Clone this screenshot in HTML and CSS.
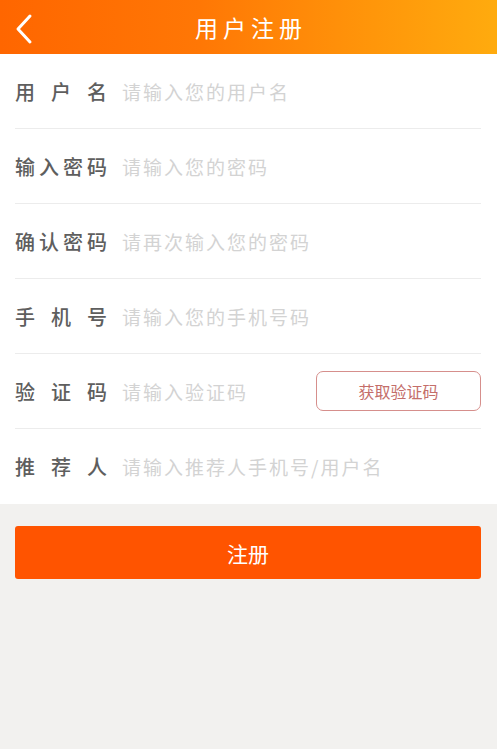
FILE: index.html
```html
<!DOCTYPE html>
<html lang="zh-CN">
<head>
    <meta charset="UTF-8">
    <meta name="viewport" content="width=device-width, initial-scale=1.0">
    <title>用户注册</title>
    <link rel="stylesheet" href="styles.css">
</head>
<body>
    <header class="top-bar">
        <a class="back-btn" href="#">
            <svg width="20" height="32" viewBox="0 0 20 32">
                <polyline points="16,3 4,16 16,29" fill="none" stroke="#fff" stroke-width="3" stroke-linecap="round" stroke-linejoin="round"/>
            </svg>
        </a>
        <h1 class="page-title">用户注册</h1>
    </header>

    <form class="reg-form">
        <div class="form-list">
            <div class="form-row">
                <label class="row-label" for="username">用户名</label>
                <input type="text" id="username" placeholder="请输入您的用户名">
            </div>
            <div class="form-row">
                <label class="row-label" for="pwd">输入密码</label>
                <input type="password" id="pwd" placeholder="请输入您的密码">
            </div>
            <div class="form-row">
                <label class="row-label" for="pwd2">确认密码</label>
                <input type="password" id="pwd2" placeholder="请再次输入您的密码">
            </div>
            <div class="form-row">
                <label class="row-label" for="mobile">手机号</label>
                <input type="text" id="mobile" placeholder="请输入您的手机号码">
            </div>
            <div class="form-row">
                <label class="row-label" for="code">验证码</label>
                <input type="text" id="code" placeholder="请输入验证码">
                <button type="button" class="code-btn">获取验证码</button>
            </div>
            <div class="form-row">
                <label class="row-label" for="referrer">推荐人</label>
                <input type="text" id="referrer" placeholder="请输入推荐人手机号/用户名">
            </div>
        </div>

        <div class="submit-wrap">
            <button type="button" class="submit-btn">注册</button>
        </div>
    </form>
</body>
</html>
```

FILE: styles.css
```css
* {
    box-sizing: border-box;
    margin: 0;
    padding: 0;
    font-family: "Noto Sans CJK SC", "Noto Sans", sans-serif;
}

body {
    background-color: #f2f1ef;
    height: 100vh;
}

.top-bar {
    height: 54px;
    display: flex;
    align-items: center;
    justify-content: center;
    position: relative;
    background: linear-gradient(90deg, #ff6600 0%, #ff7705 40%, #ff960a 75%, #ffab0e 100%);
}

.back-btn {
    position: absolute;
    left: 14px;
    top: 13px;
    display: block;
}

.page-title {
    color: #fff;
    font-size: 23px;
    font-weight: normal;
    letter-spacing: 5px;
    margin-left: 5px;
}

.form-list {
    background: #fff;
    padding: 0 16px 0 15px;
}

.form-row {
    display: flex;
    align-items: center;
    height: 75px;
    border-bottom: 1px solid #ececec;
}

.form-row:last-child {
    border-bottom: none;
}

.row-label {
    width: 92px;
    flex-shrink: 0;
    font-size: 20px;
    font-weight: 500;
    color: #5e5e5e;
    text-align: justify;
    text-align-last: justify;
    margin-right: 15px;
}

.form-row input {
    flex: 1;
    min-width: 0;
    border: none;
    outline: none;
    font-size: 19px;
    letter-spacing: 2px;
    color: #333;
    background: transparent;
}

.form-row input::placeholder {
    color: #d3d3d3;
}

.code-btn {
    width: 165px;
    height: 40px;
    flex-shrink: 0;
    border: 1.5px solid #d68f8c;
    border-radius: 7px;
    background: #fff;
    color: #c46e6a;
    font-size: 16px;
}

.submit-wrap {
    padding: 22px 16px 0 15px;
}

.submit-btn {
    width: 100%;
    height: 53px;
    border: none;
    border-radius: 3px;
    background-color: #ff5400;
    color: #fff;
    font-size: 21px;
    cursor: pointer;
}
```
